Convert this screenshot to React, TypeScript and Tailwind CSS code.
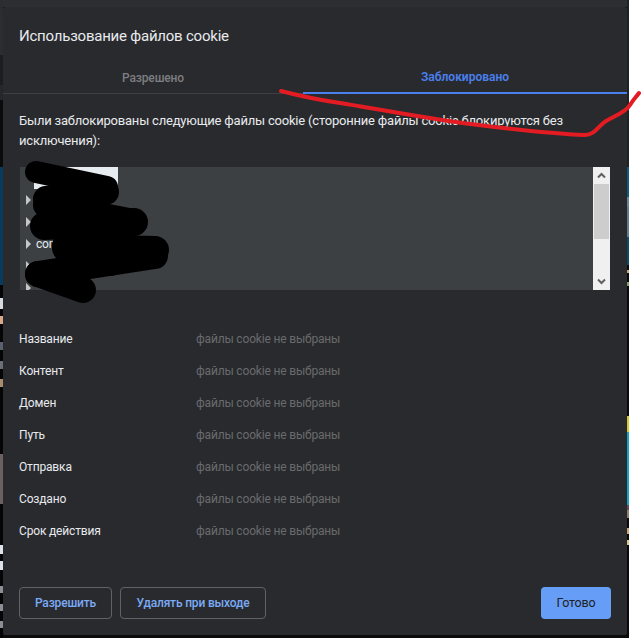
const fields = ['Название', 'Контент', 'Домен', 'Путь', 'Отправка', 'Создано', 'Срок действия']

// куски страницы, видимые по краям диалога: [высота, цвет]
const leftEdge: [number, string][] = [
  [55, '#2b2d30'], [30, '#1c1d1f'], [15, '#26272a'], [67, '#0b0b0c'], [118, '#063c5e'], [13, '#050505'],
  [11, '#d5dde3'], [7, '#050505'], [8, '#d9a78a'], [18, '#050505'], [8, '#59616e'], [11, '#050505'], [8, '#6b6f76'],
  [10, '#050505'], [8, '#a88a6c'], [67, '#050505'], [50, '#6b5f62'], [41, '#050505'], [9, '#dbe2e8'], [7, '#050505'],
  [9, '#dbe2e8'], [16, '#050505'], [7, '#8a8f96'], [11, '#050505'], [7, '#8a8f96'], [10, '#050505'], [7, '#8a8f96'], [11, '#050505'],
]

const rightEdge: [number, string][] = [
  [167, '#1f2123'], [30, '#0d5c80'], [10, '#6c8592'], [30, '#5e7c8c'], [28, '#0c4a66'], [5, '#0a0a0a'], [3, '#c8a878'],
  [9, '#0a0a0a'], [4, '#8a9a6a'], [130, '#0a0a0a'], [16, '#d6cb2a'], [73, '#0ea5c9'], [5, '#6a4a5a'], [8, '#8a8070'],
  [10, '#0a0a0a'], [6, '#c8a878'], [6, '#0a0a0a'], [5, '#d8c890'], [123, '#0a0a0a'],
]

function Edge({ parts, width }: { parts: [number, string][]; width: number }) {
  return (
    <div className="flex h-[638px] shrink-0 flex-col overflow-hidden" style={{ width }}>
      {parts.map(([h, color], i) => (
        <div key={i} className="shrink-0" style={{ height: h, background: color }} />
      ))}
    </div>
  )
}

function Scrollbar() {
  return (
    <div className="flex w-[17px] shrink-0 flex-col items-center bg-[#f0f0f0]">
      <div className="flex h-[17px] w-full items-center justify-center">
        <svg width="9" height="7" viewBox="0 0 9 7">
          <path d="M1 5.5 L4.5 2 L8 5.5" fill="none" stroke="#606060" strokeWidth="2" />
        </svg>
      </div>
      <div className="h-[55px] w-[15px] bg-[#cdcdcd]" />
      <div className="flex-1" />
      <div className="flex h-[17px] w-full items-center justify-center">
        <svg width="9" height="7" viewBox="0 0 9 7">
          <path d="M1 1.5 L4.5 5 L8 1.5" fill="none" stroke="#606060" strokeWidth="2" />
        </svg>
      </div>
    </div>
  )
}

function TreeRow({ label }: { label?: string }) {
  return (
    <div className="flex h-[22px] items-center gap-[5px] pl-[6px]">
      <span className="h-0 w-0 border-y-[5px] border-l-[5px] border-y-transparent border-l-[#c4c7c5]" />
      <span className="text-[12px] text-[#e8eaed]">{label}</span>
    </div>
  )
}

export default function App() {
  return (
    <div
      className="relative flex h-[638px] w-[642px] overflow-hidden bg-white text-[12px] tracking-[-0.17px]"
      style={{ fontFamily: 'Roboto, "Noto Sans", sans-serif' }}
    >
      <Edge parts={leftEdge} width={3} />

      <div className="flex h-[638px] w-[624px] shrink-0 flex-col bg-[#0b0b0c]">
        <div className="h-[7px] shrink-0 bg-[#2c2e31]" />
        <div className="flex h-[628px] flex-col rounded-[2px] bg-[#292a2d] text-[#e8eaed]">
          <h1 className="pl-[16px] pt-[17px] text-[15px] leading-[24px] tracking-[-0.22px]">Использование файлов cookie</h1>

          <div className="mt-[10px] flex h-[36px] border-b border-[#3c4043]">
            <div className="flex w-[300px] items-center justify-center pt-[4px] font-medium text-[#7d7e81]">Разрешено</div>
            <div className="-mb-px flex flex-1 items-center justify-center border-b-2 border-[#4a80ee] pt-[4px] font-semibold tracking-normal text-[#4a80ee]">
              Заблокировано
            </div>
          </div>

          <p className="mt-[17px] px-[16px] text-[13px] leading-[20px] tracking-[-0.2px]">
            Были заблокированы следующие файлы cookie (сторонние файлы cookie блокируются без исключения):
          </p>

          <div className="ml-[17px] mt-[16px] flex h-[123px] w-[590px] bg-[#3c4043]">
            <div className="flex-1 overflow-hidden">
              <div className="ml-[14px] h-[22px] w-[84px] bg-[#e6ecef]" />
              <TreeRow />
              <TreeRow />
              <TreeRow label="com" />
              <TreeRow />
              <TreeRow />
            </div>
            <Scrollbar />
          </div>

          <div className="mt-[33px] flex flex-col px-[16px]">
            {fields.map((name) => (
              <div key={name} className="flex h-[32px] items-center">
                <span className="w-[177px]">{name}</span>
                <span className="text-[#696a6d]">файлы cookie не выбраны</span>
              </div>
            ))}
          </div>

          <div className="mt-auto flex gap-[8px] pb-[16px] pl-[16px] pr-[16px]">
            <button className="h-[32px] w-[93px] rounded-[4px] border border-[#5f6368] font-medium text-[#7baaf7]">Разрешить</button>
            <button className="h-[32px] w-[146px] rounded-[4px] border border-[#5f6368] font-medium text-[#7baaf7]">Удалять при выходе</button>
            <button className="ml-auto h-[32px] w-[70px] rounded-[4px] bg-[#669df6] text-[12.5px] text-[#202124]">Готово</button>
          </div>
        </div>
      </div>

      <Edge parts={rightEdge} width={2} />

      {/* редактирование поверх скриншота */}
      <svg className="absolute left-0 top-0" width="642" height="638" viewBox="0 0 642 638" fill="none">
        <g stroke="#000" strokeLinecap="round" strokeLinejoin="round">
          <path d="M36 172 L107 187" strokeWidth="22" />
          <path d="M46 199 L106 192" strokeWidth="26" />
          <path d="M46 205 L134 222" strokeWidth="26" />
          <path d="M44 226 L134 222" strokeWidth="28" />
          <path d="M66 246 L110 262" strokeWidth="28" />
          <path d="M66 248 L155 250" strokeWidth="28" />
          <path d="M38 274 L155 256" strokeWidth="26" />
          <path d="M38 274 L83 290" strokeWidth="26" />
        </g>
        <path
          d="M281 91 C300 96 320 100 340 103 S430 119 470 124 S560 134 585 135 C595 135 598 126 606 121 C615 116 626 112 630 105 C633 100 636 97 639 93"
          stroke="#e31c23"
          strokeWidth="4"
          strokeLinecap="round"
        />
      </svg>
    </div>
  )
}
